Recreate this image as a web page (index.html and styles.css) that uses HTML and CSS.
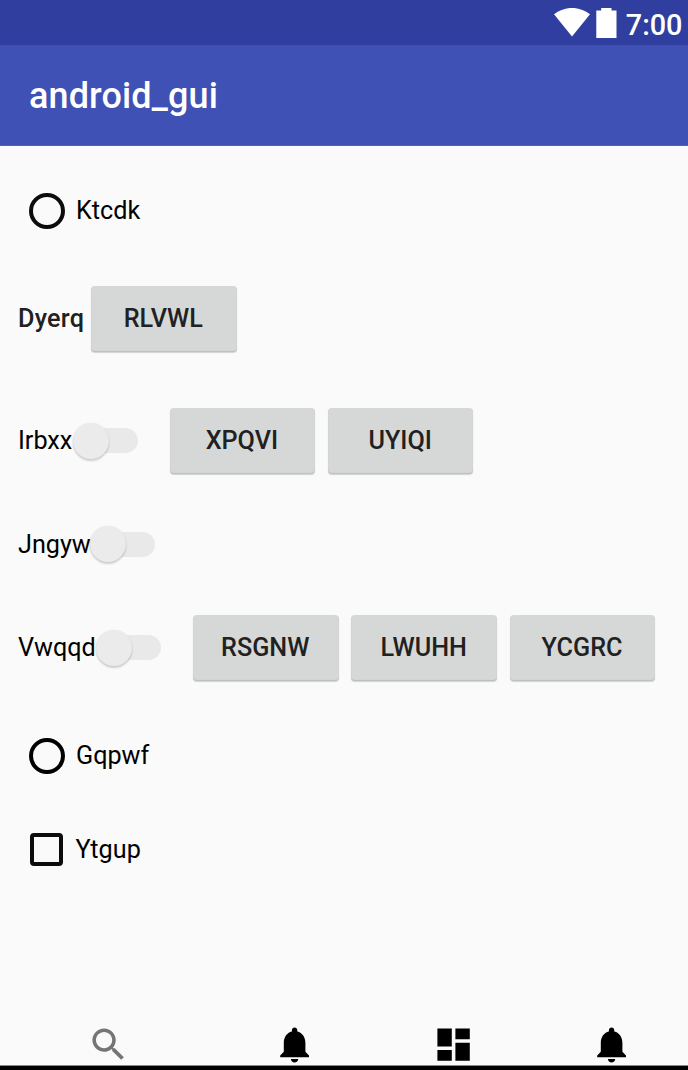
FILE: index.html
```html
<!DOCTYPE html>
<html lang="en">
<head>
<meta charset="utf-8">
<title>android_gui</title>
<link rel="stylesheet" href="styles.css">
</head>
<body>
<div class="screen">
  <div class="status-bar">
    <svg class="wifi" width="38" height="30" viewBox="0 0 38 30"><path d="M1 6.2C12-2.2 26-2.2 37 6.2L19 28.5Z"/></svg>
    <svg class="battery" width="21" height="30" viewBox="0 0 21 30"><path d="M5.2 0h10.3v2.6h5V30H.3V2.6h4.9z"/></svg>
    <span class="clock">7:00</span>
  </div>
  <header class="app-bar"><h1 class="title">android_gui</h1></header>
  <main class="content">
    <label class="row choice"><span class="radio soft"></span><span class="text">Ktcdk</span></label>
    <div class="row">
      <span class="text strong">Dyerq</span>
      <div class="buttons"><button class="button">RLVWL</button></div>
    </div>
    <div class="row">
      <span class="text short">Irbxx</span><span class="switch"><span class="thumb"></span></span>
      <div class="buttons spaced"><button class="button">XPQVI</button><button class="button">UYIQI</button></div>
    </div>
    <div class="row">
      <span class="text medium">Jngyw</span><span class="switch"><span class="thumb"></span></span>
    </div>
    <div class="row">
      <span class="text long">Vwqqd</span><span class="switch"><span class="thumb"></span></span>
      <div class="buttons spaced"><button class="button">RSGNW</button><button class="button">LWUHH</button><button class="button">YCGRC</button></div>
    </div>
    <label class="row choice"><span class="radio"></span><span class="text">Gqpwf</span></label>
    <label class="row choice"><span class="checkbox"></span><span class="text">Ytgup</span></label>
  </main>
  <nav class="icons">
    <svg class="icon search" viewBox="0 0 24 24"><path d="M15.5 14h-.79l-.28-.27C15.41 12.59 16 11.11 16 9.5 16 5.91 13.09 3 9.5 3S3 5.91 3 9.5 5.91 16 9.5 16c1.61 0 3.09-.59 4.23-1.57l.27.28v.79l5 4.99L20.49 19l-4.99-5zm-6 0C7.01 14 5 11.99 5 9.5S7.01 5 9.5 5 14 7.01 14 9.5 11.99 14 9.5 14z"/></svg>
    <svg class="icon" viewBox="0 0 24 24"><path d="M12 22c1.1 0 2-.9 2-2h-4c0 1.1.89 2 2 2zm6-6v-5c0-3.07-1.64-5.64-4.5-6.32V4c0-.83-.67-1.5-1.5-1.5s-1.5.67-1.5 1.5v.68C7.63 5.36 6 7.92 6 11v5l-2 2v1h16v-1l-2-2z"/></svg>
    <svg class="icon" viewBox="0 0 24 24"><path d="M3 13h8V3H3v10zm0 8h8v-6H3v6zm10 0h8V11h-8v10zm0-18v6h8V3h-8z"/></svg>
    <svg class="icon" viewBox="0 0 24 24"><path d="M12 22c1.1 0 2-.9 2-2h-4c0 1.1.89 2 2 2zm6-6v-5c0-3.07-1.64-5.64-4.5-6.32V4c0-.83-.67-1.5-1.5-1.5s-1.5.67-1.5 1.5v.68C7.63 5.36 6 7.92 6 11v5l-2 2v1h16v-1l-2-2z"/></svg>
  </nav>
  <div class="system-bar"></div>
</div>
</body>
</html>
```
FILE: styles.css
```css
* { box-sizing: border-box; }
body { margin: 0; background: #fafafa; font-family: Roboto, sans-serif; }
.screen { width: 688px; height: 1070px; display: flex; flex-direction: column; overflow: hidden; }
.status-bar { height: 45px; flex: none; background: #303f9f; color: #fff; fill: #fff; display: flex; justify-content: flex-end; align-items: flex-start; padding: 8px 5.5px 0 0; }
.battery { margin-left: 5px; }
.clock { margin-left: 9px; font-size: 28.8px; line-height: 34px; font-weight: 500; }
.app-bar { height: 101px; flex: none; background: #3f51b5; border-bottom: 1px solid #5263bc; display: flex; align-items: center; padding: 2px 0 0 29px; }
.title { margin: 0; color: #fff; font-size: 36px; font-weight: 500; line-height: 42px; letter-spacing: .12px; }
.content { flex: 1; display: grid; grid-template-rows: 130px 86px 158px 49px 158px 58px 129px; }
.row { display: flex; align-items: center; padding-left: 18px; }
.choice { padding-left: 29px; }
.text { font-size: 25.2px; line-height: 30px; color: #000; white-space: nowrap; }
.strong { font-weight: 500; color: #212121; width: 73px; letter-spacing: .25px; }
.short { width: 54.6px; }
.medium { width: 72px; }
.long { width: 78px; }
.radio { width: 36px; height: 36px; border: 4px solid #000; border-radius: 50%; margin-right: 11px; }
.soft { border-color: #0c0c0c; }
.checkbox { width: 33px; height: 33px; border: 4px solid #0c0c0c; border-radius: 4px; margin: 0 12.5px 0 1px; }
.switch { width: 65px; height: 25px; background: #e9e9e9; border-radius: 13px; display: flex; align-items: center; margin-bottom: 1px; }
.thumb { flex: none; width: 36px; height: 36px; border-radius: 50%; background: #ebebeb; box-shadow: 0 2px 2px rgba(0,0,0,.17), 0 0 2px rgba(0,0,0,.07); }
.buttons { display: flex; gap: 12.9px; }
.spaced { margin-left: 32px; }
.button { width: 145.5px; height: 66px; padding: 0 1px 1px 0; border: 0; border-radius: 4px; background: #d6d8d7; color: #212121; font: 500 25.2px/30px Roboto, sans-serif; box-shadow: inset 0 -1px 1px rgba(0,0,0,.12), 0 1px 1px rgba(0,0,0,.16); }
.spaced .button { padding-bottom: 0; }
.icons { flex: none; height: 42.5px; display: flex; gap: 115.2px; padding-left: 86.6px; }
.icon { flex: none; width: 43.2px; height: 43.2px; fill: #000; }
.search { fill: #757575; margin-right: 28.3px; }
.system-bar { flex: none; height: 5px; background: #000; border-top: 1px solid #888; }
```
